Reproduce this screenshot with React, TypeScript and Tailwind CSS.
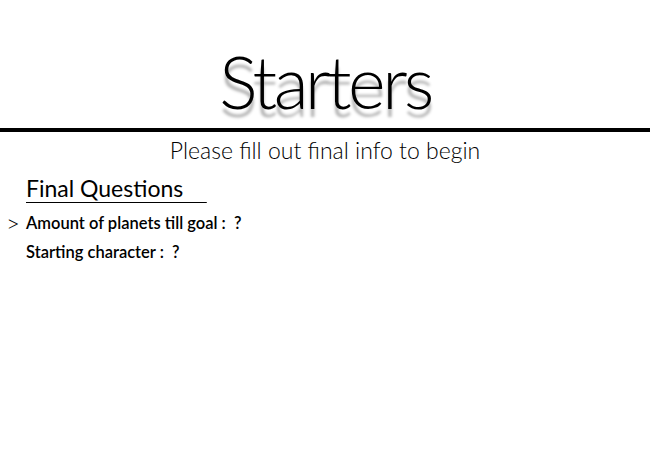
export default function App() {
  return (
    <div className="w-[650px] h-[450px] bg-white text-black" style={{ fontFamily: "Lato, 'Noto Sans', sans-serif" }}>
      <div className="pt-[42px] h-[128px] flex justify-center">
        <h1
          className="text-[72px] leading-[78px] font-light tracking-[-3.5px]"
          style={{ textShadow: "0 8px 3px rgba(0,0,0,0.3)" }}
        >
          Starters
        </h1>
      </div>
      <div className="h-[4px] bg-black" />
      <p className="text-center text-[23px] leading-[32px] font-light mt-[2px]">Please fill out final info to begin</p>
      <div className="pl-[26px] mt-[8px]">
        <h2 className="text-[23px] leading-[28px] font-normal underline underline-offset-[5px] decoration-1 whitespace-pre">Final Questions    </h2>
      </div>
      <div className="mt-[11px] flex flex-col gap-[9px] text-[16.5px] leading-[20px] font-semibold">
        <div className="flex items-center">
          <span className="w-[26px] pl-[6px] font-light text-[24px] leading-[20px]">&gt;</span>
          <span className="whitespace-pre">Amount of planets till goal :  ?</span>
        </div>
        <div className="flex">
          <span className="w-[26px]" />
          <span className="whitespace-pre">Starting character :  ?</span>
        </div>
      </div>
    </div>
  );
}
